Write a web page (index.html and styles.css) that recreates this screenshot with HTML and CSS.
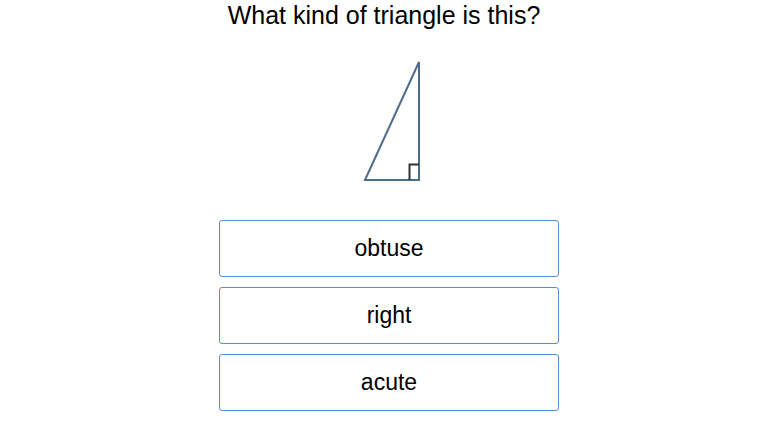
FILE: index.html
```html
<!DOCTYPE html>
<html>
<head>
<meta charset="utf-8">
<link rel="stylesheet" href="styles.css">
</head>
<body>
<main class="quiz">
  <h1 class="question">What kind of triangle is this?</h1>
  <svg class="figure" width="120" height="150" viewBox="0 0 120 150">
    <polygon points="41,130 95,12 95,130" fill="none" stroke="#4e6d8e" stroke-width="2" stroke-linejoin="miter"/>
    <polyline points="85.5,130 85.5,114.5 95,114.5" fill="none" stroke="#333" stroke-width="2"/>
  </svg>
  <div class="options">
    <button class="option">obtuse</button>
    <button class="option">right</button>
    <button class="option">acute</button>
  </div>
</main>
</body>
</html>
```
FILE: styles.css
```css
html, body {
  margin: 0;
  padding: 0;
  background: #fff;
}
.quiz {
  display: flex;
  flex-direction: column;
  align-items: center;
  font-family: "Liberation Sans", Arial, sans-serif;
  color: #000;
}
.question {
  margin: 0;
  font-size: 25px;
  font-weight: normal;
  line-height: 30px;
  text-align: center;
}
.figure {
  display: block;
  margin-top: 20px;
}
.options {
  display: flex;
  flex-direction: column;
  gap: 10px;
  margin-top: 20px;
  margin-left: 10px;
  width: 340px;
}
.option {
  height: 57px;
  box-sizing: border-box;
  border: 1px solid #5a8fcf;
  border-radius: 3px;
  background: #fff;
  font-family: "Liberation Sans", Arial, sans-serif;
  font-size: 23px;
  color: #000;
  padding: 0;
  text-align: center;
}
```
